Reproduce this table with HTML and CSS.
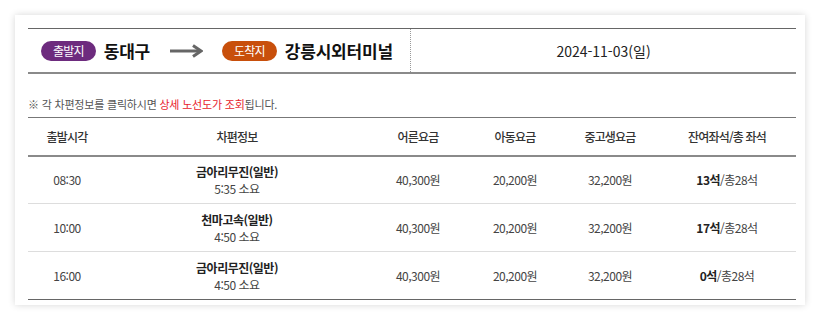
FILE: index.html
```html
<!DOCTYPE html>
<html lang="ko">
<head>
<meta charset="utf-8">
<title>배차조회</title>
<link rel="stylesheet" href="styles.css">
</head>
<body>
<div class="wrap">
  <div class="card">
    <div class="route">
      <div class="route-left">
        <span class="badge badge-dep">출발지</span>
        <span class="place">동대구</span>
        <svg class="arrow" width="33" height="14" viewBox="0 0 33 14" aria-hidden="true">
          <path d="M0 7 H30" stroke="#666" stroke-width="3" fill="none"/>
          <path d="M23 1.5 L31 7 L23 12.5" stroke="#666" stroke-width="3" fill="none" stroke-linejoin="miter"/>
        </svg>
        <span class="badge badge-arr">도착지</span>
        <span class="place">강릉시외터미널</span>
      </div>
      <div class="route-date">2024-11-03(일)</div>
    </div>
    <p class="note">※ 각 차편정보를 클릭하시면 <span class="red">상세 노선도가 조회</span>됩니다.</p>
    <table class="tbl">
      <colgroup>
        <col class="c1"><col class="c2"><col class="c3"><col class="c4"><col class="c5"><col class="c6">
      </colgroup>
      <thead>
        <tr><th>출발시각</th><th>차편정보</th><th>어른요금</th><th>아동요금</th><th>중고생요금</th><th>잔여좌석/총 좌석</th></tr>
      </thead>
      <tbody>
        <tr>
          <td>08:30</td>
          <td><div class="bus">금아리무진(일반)</div><div>5:35 소요</div></td>
          <td>40,300원</td><td>20,200원</td><td>32,200원</td>
          <td><b>13석</b>/총28석</td>
        </tr>
        <tr>
          <td>10:00</td>
          <td><div class="bus">천마고속(일반)</div><div>4:50 소요</div></td>
          <td>40,300원</td><td>20,200원</td><td>32,200원</td>
          <td><b>17석</b>/총28석</td>
        </tr>
        <tr>
          <td>16:00</td>
          <td><div class="bus">금아리무진(일반)</div><div>4:50 소요</div></td>
          <td>40,300원</td><td>20,200원</td><td>32,200원</td>
          <td><b>0석</b>/총28석</td>
        </tr>
      </tbody>
    </table>
  </div>
</div>
</body>
</html>
```

FILE: styles.css
```css
* { box-sizing: border-box; }
html, body { margin: 0; padding: 0; background: #fff; }
body {
  font-family: "Noto Sans CJK KR", "Noto Sans", sans-serif;
  color: #333;
}
.wrap { padding: 15px; }
.card {
  width: 790px;
  height: 290px;
  background: #fff;
  box-shadow: 0 0 7px rgba(0,0,0,0.16);
  padding: 13px 9px 0 13px;
}
.route {
  display: flex;
  height: 46px;
  border-top: 1px solid #666;
  border-bottom: 2px solid #8a8a8a;
}
.route-left {
  width: 383px;
  display: flex;
  align-items: center;
  padding-left: 13px;
  border-right: 1px dotted #999;
}
.badge {
  display: inline-flex;
  align-items: center;
  justify-content: center;
  height: 20px;
  padding: 0 12px;
  border-radius: 10px;
  color: #fff;
  font-size: 12px;
  letter-spacing: -0.8px;
  line-height: 20px;
}
.badge-dep { background: #6d2b7e; }
.badge-arr { background: #c84f0b; }
.place {
  margin-left: 8px;
  font-size: 17px;
  font-weight: 700;
  color: #111;
  line-height: 20px;
  letter-spacing: -0.2px;
}
.arrow { margin: 0 19px 0 20px; display: block; }
.route-date {
  flex: 1;
  display: flex;
  align-items: center;
  justify-content: center;
  font-size: 14px;
  color: #222;
}
.note {
  margin: 22px 0 5px;
  font-size: 11px;
  line-height: 16px;
  color: #555;
  letter-spacing: -0.2px;
}
.red { color: #e8232b; }
.tbl {
  width: 768px;
  border-collapse: collapse;
  table-layout: fixed;
  font-size: 12px;
  letter-spacing: -0.5px;
  color: #444;
}
.c1 { width: 78px; }
.c2 { width: 262px; }
.c3 { width: 100px; }
.c4 { width: 94px; }
.c5 { width: 96px; }
.c6 { width: 138px; }
.tbl thead tr { border-top: 1px solid #777; border-bottom: 2px solid #8a8a8a; }
.tbl th {
  height: 38px;
  font-weight: 500;
  color: #333;
  text-align: center;
  padding: 0;
  letter-spacing: -0.8px;
}
.tbl td {
  height: 48px;
  text-align: center;
  padding: 0;
  line-height: 17px;
}
.tbl tbody tr { border-bottom: 1px solid #ddd; }
.tbl tbody tr:last-child { border-bottom: 1px solid #666; }
.bus { font-weight: 700; color: #222; }
.tbl b { font-weight: 700; color: #222; }
```
